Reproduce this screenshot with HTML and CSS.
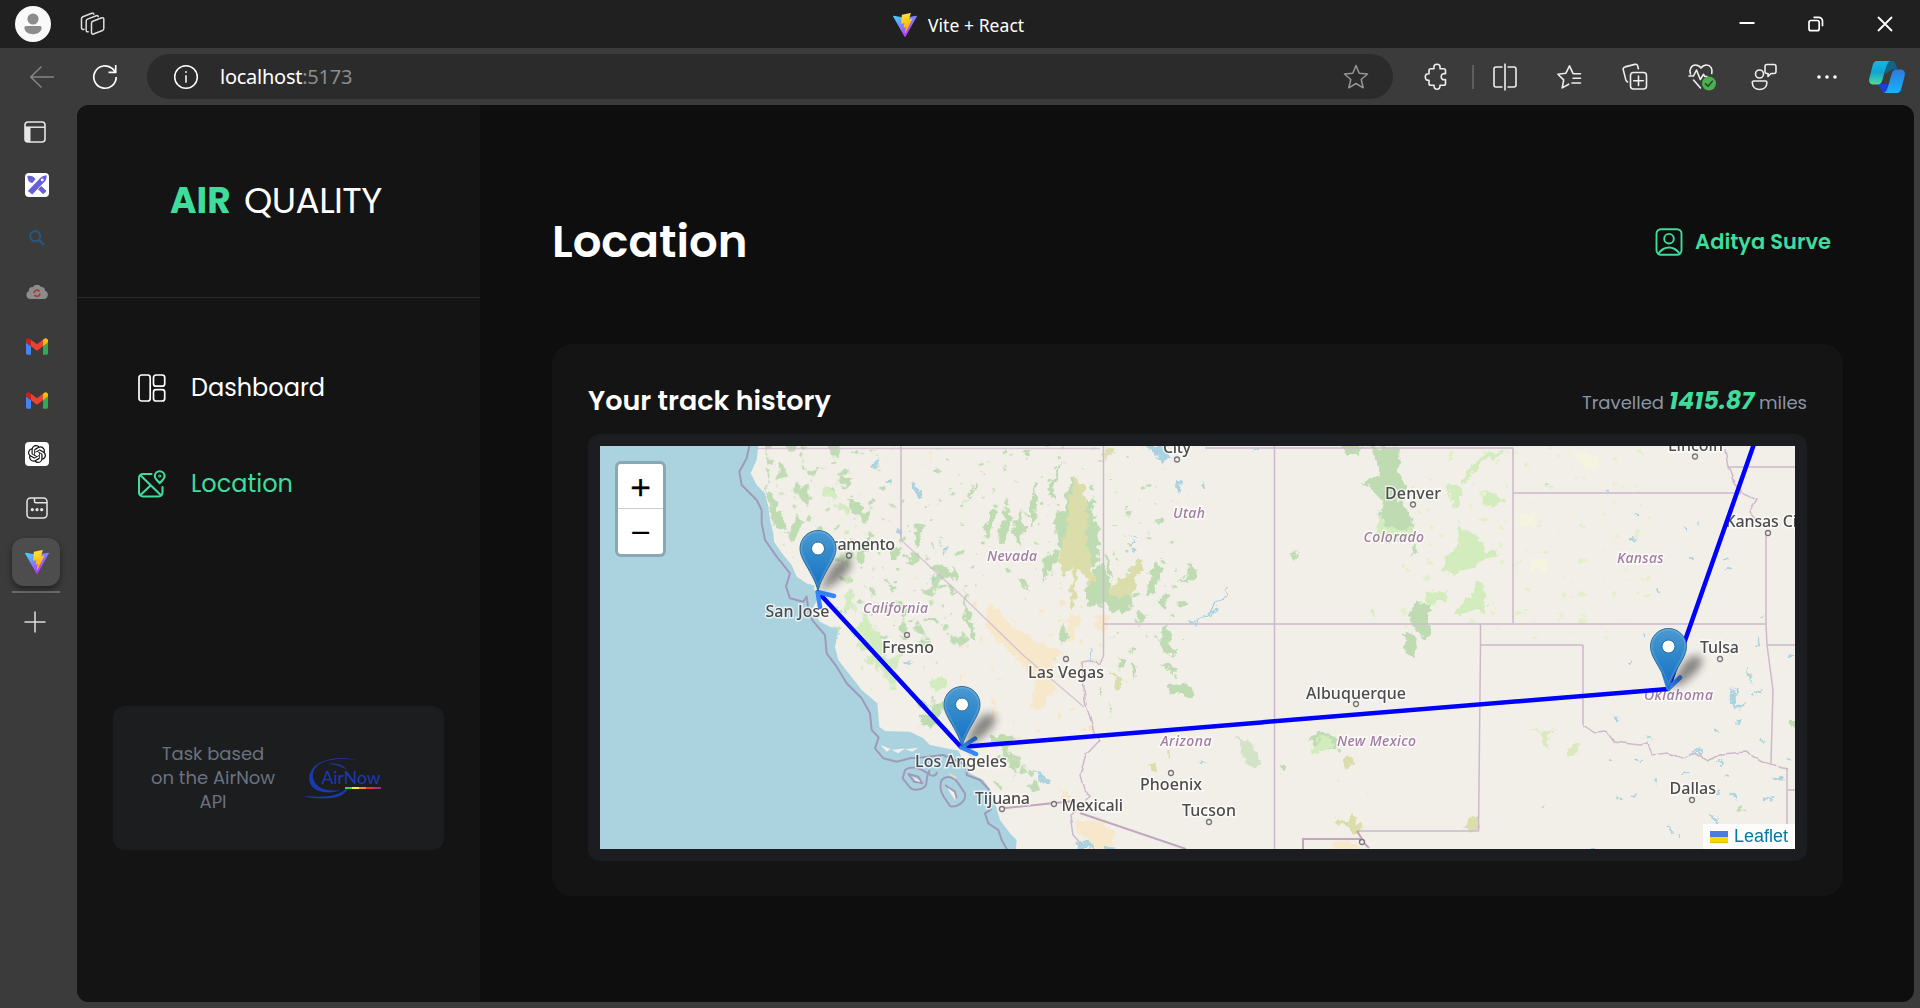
FILE: index.html
```html
<!DOCTYPE html>
<html lang="en">
<head>
<meta charset="utf-8">
<title>Vite + React</title>
<link rel="stylesheet" href="styles.css">
</head>
<body>
<svg class="defs" width="0" height="0" aria-hidden="true">
  <defs>
    <linearGradient id="vite-v" x1="0" y1="0.1" x2="0.6" y2="0.9"><stop offset="0" stop-color="#41d1ff"/><stop offset="1" stop-color="#bd34fe"/></linearGradient>
    <linearGradient id="vite-b" x1="0.4" y1="0" x2="0.6" y2="0.9"><stop offset="0" stop-color="#ffea83"/><stop offset="0.1" stop-color="#ffdd35"/><stop offset="1" stop-color="#ffa800"/></linearGradient>
    <linearGradient id="cop-a" x1="0" y1="0" x2="0" y2="1"><stop offset="0" stop-color="#16b5ea"/><stop offset="0.5" stop-color="#12a5cf"/><stop offset="1" stop-color="#52dd92"/></linearGradient>
    <linearGradient id="cop-b" x1="0" y1="0" x2="0" y2="1"><stop offset="0" stop-color="#2f78e0"/><stop offset="1" stop-color="#17b4f5"/></linearGradient>
    <linearGradient id="pin-fill" x1="0" y1="0" x2="0" y2="1"><stop offset="0" stop-color="#4b9ad2"/><stop offset="0.35" stop-color="#358bcb"/><stop offset="1" stop-color="#126fc6"/></linearGradient>
    <symbol id="vite" viewBox="0 0 256 257">
      <path fill="url(#vite-v)" d="M255.153 37.938L134.897 252.976c-2.483 4.44-8.862 4.466-11.382.048L.875 37.958c-2.746-4.814 1.371-10.646 6.827-9.67l120.385 21.517a6.537 6.537 0 0 0 2.322-.004l117.867-21.483c5.438-.991 9.574 4.796 6.877 9.62Z"/>
      <path fill="url(#vite-b)" d="M185.432.063L96.44 17.501a3.268 3.268 0 0 0-2.634 3.014l-5.474 92.456a3.268 3.268 0 0 0 3.997 3.378l24.777-5.718c2.318-.535 4.413 1.507 3.936 3.838l-7.361 36.047c-.495 2.426 1.782 4.5 4.151 3.78l15.304-4.649c2.372-.72 4.652 1.36 4.15 3.788l-11.698 56.621c-.732 3.542 3.979 5.473 5.943 2.437l1.313-2.028l72.516-144.72c1.215-2.423-.88-5.186-3.54-4.672l-25.505 4.922c-2.396.462-4.435-1.77-3.759-4.114l16.646-57.705c.677-2.35-1.37-4.583-3.769-4.113Z"/>
    </symbol>
    <symbol id="gmail" viewBox="52 42 88 66">
      <path fill="#4285f4" d="M58 108h14V74L52 59v43c0 3.32 2.69 6 6 6"/><path fill="#34a853" d="M120 108h14c3.32 0 6-2.69 6-6V59l-20 15"/><path fill="#fbbc04" d="M120 48v26l20-15v-8c0-7.42-8.47-11.65-14.4-7.2"/><path fill="#ea4335" d="M72 74V48l24 18 24-18v26L96 92"/><path fill="#c5221f" d="M52 51v8l20 15V48l-5.6-4.2c-5.94-4.45-14.4-.22-14.4 7.2"/>
    </symbol>
  </defs>
</svg>

<header class="titlebar">
  <div class="titlebar-left">
    <svg class="avatar" width="36" height="36" viewBox="0 0 36 36"><circle cx="18" cy="18" r="18" fill="#f9f9f9"/><circle cx="18" cy="13" r="5.6" fill="#8c8c8c"/><path d="M11 20h14a1.6 1.6 0 0 1 1.6 1.6c0 4.4-4 6.6-8.600 6.600s-8.600-2.200-8.600-6.600A1.600 1.600 0 0 1 11 20z" fill="#8c8c8c"/></svg>
    <svg width="26" height="26" viewBox="0 0 26 26" fill="none" stroke="#dedede" stroke-width="1.5" stroke-linejoin="round" stroke-linecap="round"><path d="M11.500 12.200c0-.9.500-1.600 1.300-1.900l9-3.500c1-.4 2 .3 2 1.300v9.500c0 .8-.5 1.600-1.300 1.900l-9 3.500c-1 .4-2-.3-2-1.300z"/><path d="M8.200 20.800c-1.200.2-2-.4-2-1.400V10c0-.8.500-1.600 1.300-1.900L16.300 4.700c1-.3 1.800.1 2 .9"/><path d="M4 18.300c-1.500.500-2.500-.2-2.500-1.300V7.600c0-.8.500-1.600 1.300-1.900l9-3.400c1-.3 1.800 0 2 .9"/></svg>
  </div>
  <div class="titlebar-title"><svg width="24" height="24"><use href="#vite"/></svg><span>Vite + React</span></div>
  <div class="window-buttons">
    <svg width="16" height="16" viewBox="0 0 16 16"><path d="M.5 7h15" stroke="#fff" stroke-width="2"/></svg>
    <svg width="16" height="16" viewBox="0 0 16 16" fill="none" stroke="#fff" stroke-width="1.700"><rect x="1" y="4.500" width="10.200" height="10.200" rx="2"/><path d="M5.500 1.300h5a4 4 0 0 1 4 4v5"/></svg>
    <svg width="16" height="16" viewBox="0 0 16 16"><path d="M1 1l14 14M15 1L1 15" stroke="#fff" stroke-width="1.800"/></svg>
  </div>
</header>

<nav class="toolbar">
  <div class="nav-buttons">
    <svg width="26" height="24" viewBox="0 0 26 24" fill="none" stroke="#858585" stroke-width="1.500"><path d="M25 12H2M12.500 1.500L1.800 12l10.700 10.500"/></svg>
    <svg width="26" height="26" viewBox="0 0 26 26" fill="none" stroke="#fff" stroke-width="1.700"><path d="M24.200 13A11.200 11.200 0 1 1 20.500 4.700L23.500 8M23.700 1v7.300h-7.200"/></svg>
  </div>
  <div class="address">
    <svg width="26" height="26" viewBox="0 0 26 26" fill="none" stroke="#fff" stroke-width="1.500"><circle cx="13" cy="13" r="11.300"/><path d="M13 11.300v7.500"/><circle cx="13" cy="8" r=".6" fill="#fff" stroke-width=".8"/></svg>
    <span class="url">localhost<span class="port">:5173</span></span>
    <svg class="star" width="26" height="26" viewBox="0 0 26 26" fill="none" stroke="#969696" stroke-width="1.500" stroke-linejoin="round"><path d="M13 1.500l3.200 7.800 8.300.7-6.300 5.500 2 8.300L13 19.500l-7.200 4.300 2-8.300L1.500 10l8.300-.7z"/></svg>
  </div>
  <div class="tools">
    <span class="tool w64"><svg width="26" height="28" viewBox="-1 0 26 28" fill="none" stroke="#eee" stroke-width="1.600" stroke-linejoin="round"><path d="M5 7.500A1.800 1.800 0 0 1 6.800 5.700H10c-.6-3 .8-4.500 3-4.500s3.600 1.500 3 4.500h3.700a1.800 1.800 0 0 1 1.800 1.800v3.300c-2.600-.6-4.300.6-4.300 2.900s1.700 3.500 4.300 2.900v3.900a1.800 1.800 0 0 1-1.800 1.800H16c.2 2.700-1 4-3 4s-3.200-1.300-3-4H6.800A1.800 1.800 0 0 1 5 20.500v-3.300c-2.500.3-3.700-1-3.700-3.200S2.500 10.500 5 10.800z"/></svg></span>
    <i class="sep"></i>
    <span class="tool w62"><svg width="26" height="28" viewBox="0 0 26 28" fill="none" stroke="#eee" stroke-width="1.600"><path d="M13 .5v27M10.500 4H4a2 2 0 0 0-2 2v16a2 2 0 0 0 2 2h6.500M15.500 4H22a2 2 0 0 1 2 2v16a2 2 0 0 1-2 2h-6.500"/></svg></span>
    <span class="tool w66"><svg width="26" height="26" viewBox="0 0 26 26" fill="none" stroke="#eee" stroke-width="1.600" stroke-linejoin="round" stroke-linecap="round"><path d="M24.500 9.700h-7.400L13.500 1.800 9.900 9.200l-8 1 5.800 5.700-1.500 8 6.500-3.700M17 14.200h7.500M16 19h8.500"/></svg></span>
    <span class="tool w66"><svg width="26" height="28" viewBox="0 0 26 28" fill="none" stroke="#eee" stroke-width="1.600" stroke-linejoin="round" stroke-linecap="round"><rect x="8.500" y="9.500" width="16" height="16.500" rx="3"/><path d="M16.500 13v9.500M11.700 17.700h9.600M5.500 19c-1.200-.7-1.500-1.600-1.800-2.600L1.300 6.900C.9 5.300 1.600 4.300 3 3.900l9.800-2.500c1.500-.4 2.500.3 2.900 1.600l.7 2.800"/></svg></span>
    <span class="tool w66 health"><svg width="30" height="30" viewBox="0 0 30 30" fill="none" stroke="#eee" stroke-width="1.600" stroke-linejoin="round" stroke-linecap="round"><path d="M3.500 12C1.800 7.500 4.500 3 8.500 3c2.500 0 4.200 1.300 5.500 3 1.300-1.700 3-3 5.500-3 4 0 6.500 4 5.300 8.500M2 14h4.500L9.500 8l3.800 9.500 3.200-5.200 1.300 2.200H20M6.500 18l7 8"/><circle cx="22" cy="21.500" r="7" fill="#4caf50" stroke="none"/><path d="M18.500 21.800l2.500 2.400 4.300-5" stroke="#2b4a2c"/></svg></span>
    <span class="tool w60"><svg width="26" height="28" viewBox="0 0 26 28" fill="none" stroke="#eee" stroke-width="1.600" stroke-linejoin="round"><circle cx="8.500" cy="11" r="4"/><path d="M2.800 18h11.600a1.500 1.500 0 0 1 1.500 1.500c0 4.500-3.300 7-7.300 7s-7.300-2.500-7.300-7A1.500 1.500 0 0 1 2.800 18zM16 1.500h7a2 2 0 0 1 2 2v5a2 2 0 0 1-2 2h-3l-3 3v-3h-1a2 2 0 0 1-2-2v-5a2 2 0 0 1 2-2z"/></svg></span>
    <span class="tool w66"><svg width="22" height="6" viewBox="0 0 22 6" fill="#fff"><circle cx="3" cy="3" r="1.800"/><circle cx="11" cy="3" r="1.800"/><circle cx="19" cy="3" r="1.800"/></svg></span>
    <span class="tool w54"><svg width="38" height="34" viewBox="0 0 38 34"><path d="M19 1h5c2 0 3.300 1.500 4 4l1.200 4H25l-8 5z" fill="#0f6488"/><path d="M9 24h10l4 9h-5c-3 0-4-1-5-4z" fill="#1d3fd0"/><path d="M9.500 1H22c-2 1-3 3-4 6.500l-3.800 13c-.8 2.800-2 4-4.600 4H5.500c-3.500 0-5-2.600-4.200-6L4.500 6c.9-3.600 2-5 5-5z" fill="url(#cop-a)"/><path d="M28.500 33H16c2-1 3-3 4-6.500l3.800-13c.8-2.800 2-4 4.600-4h4.100c3.500 0 5 2.600 4.200 6L33.500 28c-.9 3.600-2 5-5 5z" fill="url(#cop-b)"/></svg></span>
  </div>
</nav>

<div class="body">
  <aside class="tabs">
    <div class="tab"><svg class="nudge" width="22" height="22" viewBox="0 0 22 22"><rect x="1" y="1" width="20" height="20" rx="3" fill="none" stroke="#e6e6e6" stroke-width="1.600"/><path d="M1 6.200h20" stroke="#e6e6e6" stroke-width="1.500"/><path d="M1 6h5.500v15H3a2 2 0 0 1-2-2z" fill="#e6e6e6"/></svg></div>
    <div class="tab"><svg width="24" height="24" viewBox="0 0 24 24"><rect width="24" height="24" rx="4" fill="#fff"/><path d="M2.500 3c3.500-.6 6.500.6 8 3.200L7.200 10C4 9.800 2.200 6.500 2.500 3zM16.300 13l5.200 5-3.300 3.300-5.200-5z" fill="#665fd8"/><path d="M2.800 18L13.200 7.200C15.300 4.500 18 2.600 21.700 2.300c0 3.900-1.300 6.400-4.200 8.500L7.300 21.500z" fill="#665fd8"/><circle cx="17.200" cy="6.900" r="1.400" fill="#fff"/></svg></div>
    <div class="tab"><svg width="16" height="16" viewBox="0 0 16 16" fill="none" stroke="#225a86" stroke-width="2"><circle cx="6.200" cy="6.200" r="5"/><path d="M9.800 9.800l5.200 5.200"/></svg></div>
    <div class="tab"><svg width="22" height="16" viewBox="0 0 22 16"><path d="M4.500 15a4.200 4.200 0 0 1-1.700-8C2.500 4 5 2.500 7 3.200 8.500 0 13.500 0 15 3.200c2.200-.5 4.300 1.200 3.900 3.600A4.200 4.200 0 0 1 17.500 15z" fill="#8c8c8c"/><path d="M8 9a3 3 0 0 1 5.500-1.500M14 9.500A3 3 0 0 1 8.500 11" fill="none" stroke="#a83c3c" stroke-width="1.700"/></svg></div>
    <div class="tab"><svg width="22" height="17"><use href="#gmail"/></svg></div>
    <div class="tab"><svg width="22" height="17"><use href="#gmail"/></svg></div>
    <div class="tab"><svg width="24" height="24" viewBox="0 0 24 24"><rect width="24" height="24" rx="4" fill="#fff"/><path transform="translate(3 3) scale(.75)" fill="#111" d="M22.2819 9.8211a5.9847 5.9847 0 0 0-.5157-4.9108 6.0462 6.0462 0 0 0-6.5098-2.9A6.0651 6.0651 0 0 0 4.9807 4.1818a5.9847 5.9847 0 0 0-3.9977 2.9 6.0462 6.0462 0 0 0 .7427 7.0966 5.98 5.98 0 0 0 .511 4.9107 6.051 6.051 0 0 0 6.5146 2.9001A5.9847 5.9847 0 0 0 13.2599 24a6.0557 6.0557 0 0 0 5.7718-4.2058 5.9894 5.9894 0 0 0 3.9977-2.9001 6.0557 6.0557 0 0 0-.7475-7.0729zm-9.022 12.6081a4.4755 4.4755 0 0 1-2.8764-1.0408l.1419-.0804 4.7783-2.7582a.7948.7948 0 0 0 .3927-.6813v-6.7369l2.02 1.1686a.071.071 0 0 1 .038.052v5.5826a4.504 4.504 0 0 1-4.4945 4.4944zm-9.6607-4.1254a4.4708 4.4708 0 0 1-.5346-3.0137l.142.0852 4.783 2.7582a.7712.7712 0 0 0 .7806 0l5.8428-3.3685v2.3324a.0804.0804 0 0 1-.0332.0615L9.74 19.9502a4.4992 4.4992 0 0 1-6.1408-1.6464zM2.3408 7.8956a4.485 4.485 0 0 1 2.3655-1.9728V11.6a.7664.7664 0 0 0 .3879.6765l5.8144 3.3543-2.0201 1.1685a.0757.0757 0 0 1-.071 0l-4.8303-2.7865A4.504 4.504 0 0 1 2.3408 7.872zm16.5963 3.8558L13.1038 8.364 15.1192 7.2a.0757.0757 0 0 1 .071 0l4.8303 2.7913a4.4944 4.4944 0 0 1-.6765 8.1042v-5.6772a.79.79 0 0 0-.407-.667zm2.0107-3.0231l-.142-.0852-4.7735-2.7818a.7759.7759 0 0 0-.7854 0L9.409 9.2297V6.8974a.0662.0662 0 0 1 .0284-.0615l4.8303-2.7866a4.4992 4.4992 0 0 1 6.6802 4.66zM8.3065 12.863l-2.02-1.1638a.0804.0804 0 0 1-.038-.0567V6.0742a4.4992 4.4992 0 0 1 7.3757-3.4537l-.142.0805L8.704 5.459a.7948.7948 0 0 0-.3927.6813zm1.0976-2.3654l2.602-1.4998 2.6069 1.4998v2.9994l-2.5974 1.4997-2.6067-1.4997Z"/></svg></div>
    <div class="tab"><svg width="22" height="22" viewBox="0 0 22 22" fill="none" stroke="#e6e6e6" stroke-width="1.500"><rect x="1" y="1" width="20" height="20" rx="3.500"/><path d="M8.500 1v3.300a1.500 1.500 0 0 0 1.500 1.500h11"/><g fill="#e6e6e6" stroke="none"><circle cx="6.300" cy="12.700" r="1.600"/><circle cx="11" cy="12.700" r="1.600"/><circle cx="15.700" cy="12.700" r="1.600"/></g></svg></div>
    <div class="tab"><div class="tab-active"><svg width="24" height="24"><use href="#vite"/></svg></div></div>
    <div class="tab-rule"></div>
    <svg class="tab-new" width="22" height="22" viewBox="0 0 22 22"><path d="M11 .5v21M.5 11h21" stroke="#dedede" stroke-width="1.500"/></svg>
  </aside>

  <div class="page">
    <aside class="side">
      <div class="brand"><span class="brand-air">AIR</span> <span class="brand-quality">QUALITY</span></div>
      <ul class="menu">
        <li><svg width="28" height="28" viewBox="0 0 28 28" fill="none" stroke="#fff" stroke-width="1.700"><rect x="1" y="1" width="11.200" height="26" rx="2.500"/><rect x="15.500" y="1" width="11.200" height="11.200" rx="2.500"/><rect x="15.500" y="15.600" width="11.200" height="11.400" rx="2.500"/></svg><span class="dash">Dashboard</span></li>
        <li class="active"><svg width="28" height="28" viewBox="0 0 28 28" fill="none" stroke="#3fdc9c" stroke-width="2.100" stroke-linecap="round"><path d="M13.500 4H5a4 4 0 0 0-4 4v14.500a4 4 0 0 0 4 4h15.500a4 4 0 0 0 4-4V17M2.200 5l21 20.500M2.200 25.200l10.300-9.700"/><path d="M21.700 1.200a4.900 4.900 0 0 1 4.900 4.900c0 3-3 5-4.900 6.900-1.900-1.900-4.900-3.900-4.900-6.900a4.900 4.900 0 0 1 4.900-4.900z"/><circle cx="21.700" cy="6" r=".5"/></svg><span class="loc">Location</span></li>
      </ul>
      <div class="api-card">
        <p>Task based<br>on the AirNow<br>API</p>
        <svg width="80" height="44" viewBox="0 0 80 44">
          <path d="M54 4C38 .5 20 2 11 11c-8 9-6 20 5 24 6 2 14 2 21-.5C28 35 20 34 15 30 8 24 8 15 15 9 23 3 38 2 54 4z" fill="#1b3ab0"/>
          <path d="M23 8c8-1.500 17 0 21 6-6-4-12-6-21-6zM1 40c14 1.500 27 1 36-3 4-2 6-4 7-6h2c-2 5-7 9-14 10.500C22 43 10 43 1 40z" fill="#1b3ab0"/>
          <text x="18.500" y="28" textLength="59" lengthAdjust="spacingAndGlyphs">AirNow</text>
          <path d="M42 32h7" stroke="#3fd13f" stroke-width="2"/><path d="M49 32h7" stroke="#f2ee3a" stroke-width="2"/><path d="M56 32h7.500" stroke="#f08a30" stroke-width="2"/><path d="M63.500 32h7.500" stroke="#f03030" stroke-width="2"/><path d="M71 32h7" stroke="#9c3578" stroke-width="2"/>
        </svg>
      </div>
    </aside>

    <main class="main">
      <div class="head">
        <h1>Location</h1>
        <div class="user"><svg width="28" height="28" viewBox="0 0 28 28" fill="none" stroke="#3fdc9c" stroke-width="1.900"><rect x="1.500" y="1.200" width="25" height="25.600" rx="4.500"/><circle cx="14" cy="10.700" r="4.800"/><path d="M3.500 25.500c2.500-3.500 6-6 10.500-6s8 2.500 10.500 6"/></svg><span>Aditya Surve</span></div>
      </div>
      <section class="card">
        <div class="card-head"><h2>Your track history</h2><p class="dist"><span class="d1">Travelled</span><em>1415.87</em><span class="d2">miles</span></p></div>
        <div class="map-frame"><div class="map">
<svg class="map-svg" viewBox="600 446 1195 403" preserveAspectRatio="none">
<defs>
  <filter id="rough" x="-5%" y="-5%" width="110%" height="110%"><feTurbulence type="fractalNoise" baseFrequency=".12" numOctaves="3" seed="4"/><feDisplacementMap in="SourceGraphic" scale="12" xChannelSelector="R" yChannelSelector="G"/></filter>
  <filter id="wiggle" x="-5%" y="-5%" width="110%" height="110%"><feTurbulence type="fractalNoise" baseFrequency=".08" numOctaves="2" seed="9"/><feDisplacementMap in="SourceGraphic" scale="4" xChannelSelector="R" yChannelSelector="G"/></filter>
  <filter id="patch"><feTurbulence type="fractalNoise" baseFrequency=".07 .06" numOctaves="4" seed="12"/><feColorMatrix values="0 0 0 0 0  0 0 0 0 0  0 0 0 0 0  14 0 0 0 -8.200" result="m"/><feComposite in="SourceGraphic" in2="m" operator="in"/></filter>
  <filter id="speck"><feTurbulence type="fractalNoise" baseFrequency=".09 .12" numOctaves="3" seed="31"/><feColorMatrix values="0 0 0 0 0  0 0 0 0 0  0 0 0 0 0  12 0 0 0 -8.300" result="m"/><feComposite in="SourceGraphic" in2="m" operator="in"/></filter>
  <filter id="soft" x="-50%" y="-50%" width="200%" height="200%"><feGaussianBlur stdDeviation="4"/></filter>
  <clipPath id="land"><path transform="translate(590 430) scale(.33333)" d="M508 48L500 90 482 130 500 165 525 190 535 230 540 270 550 310 552 335 580 375 605 405 620 440 650 460 670 475 682 510 665 540 690 575 720 590 745 600 735 650 745 690 780 735 815 780 862 820 868 890 885 903 960 905 1000 925 1020 945 1105 962 1140 1030 1180 1050 1205 1085 1215 1120 1230 1170 1260 1210 1280 1230 1275 1257 4000 1257 4000 48z"/></clipPath>
  <g id="pin">
    <path d="M2 0C8-16 18-36 30-33c12 4-8 26-28 33z" fill="#000" opacity=".45" filter="url(#soft)"/>
    <path d="M0 0C-2-9-7-17-12-26-15.500-32-18-37-18-42.500a18 18 0 0 1 36 0C18-37 15.500-32 12-26 7-17 2-9 0 0z" fill="url(#pin-fill)" stroke="#2e6c97" stroke-width="1"/>
    <path d="M0-5C-2-11-6-18-10.500-26.500-14-32.500-16.700-37-16.700-42.500a16.700 16.700 0 0 1 33.400 0C16.700-37 14-32.500 10.500-26.500 6-18 2-11 0-5z" fill="none" stroke="#fff" stroke-opacity=".15" stroke-width="1.500"/>
    <circle cy="-42.500" r="6.500" fill="#fff" stroke="#2e6c97" stroke-width="1"/>
  </g>
</defs>
<rect x="600" y="446" width="1195" height="403" fill="#aad3df"/>
<g transform="translate(590 430) scale(.33333)">
  <path fill="#f2efe9" filter="url(#wiggle)" d="M508 20L500 90 482 130 500 165 525 190 535 230 540 270 550 310 552 335 580 375 605 405 620 440 650 460 670 475 682 510 665 540 690 575 720 590 745 600 735 650 745 690 780 735 815 780 862 820 868 890 885 903 960 905 1000 925 1020 945 1105 962 1140 1030 1180 1050 1205 1085 1215 1120 1230 1170 1260 1210 1280 1230 1275 1290 3700 1290 3700 20z"/>
  <g fill="#f2efe9"><path d="M872 945l30 12-12 8zM905 960l40-5-20 15zM945 958l40-5-18 12zM968 1040l28 15-10 8zM1075 1068l26 30-6 12-20-30z"/></g>
  <path d="M1072 1025l30 18-10 5z" fill="#dde3c0"/>
  <g fill="none" stroke="#9f8fb5" stroke-width="6" opacity=".85" filter="url(#wiggle)" stroke-linejoin="round">
    <path d="M482 30L470 85 448 125 455 165 500 210 515 240 515 280 525 330 560 380 600 430 588 470 600 505 640 515 650 500 655 540 668 572 705 615 710 670 740 710 770 760 815 805 840 850 845 900 866 922 855 955 880 985 920 995 960 985 1000 982 1060 975 1130 1005 1130 1035 1170 1050 1198 1080"/>
    <path d="M1205 1137L1185 1150 1195 1180 1225 1200 1235 1230 1252 1260"/>
    <path d="M945 1020c20-15 50-5 68 10l-5 35c-8 15-40 20-50 5l-20-25zM1055 1050c15-15 35-10 50 10l20 30c5 25-25 45-45 38l-20-30c-12-20-10-35-5-48zM955 1032l30 8 12 20-25-5zM1065 1065l30 20 5 20M1020 1020a12 10 0 1 0 20 5"/>
  </g>
</g>
<g clip-path="url(#land)">
 <g filter="url(#patch)">
  <path fill="#bfdcb3" d="M765 446L840 446 870 500 870 560 905 600 930 640 950 700 930 730 890 650 850 600 800 560 770 500z"/>
  <path fill="#bfdcb3" d="M890 520L930 525 945 610 970 640 955 650 920 590z"/>
  <path fill="#d2ebc0" d="M815 480L850 500 860 580 900 640 905 690 870 690 835 610z"/>
  <path fill="#bfdcb3" d="M955 740L1020 735 1040 790 1010 800z"/>
 </g>
 <g filter="url(#speck)">
  <path fill="#bfdcb3" d="M760 446H1190V640H760z"/>
  <path fill="#f6e6c8" d="M960 600H1110V740H960z"/>
  <path fill="#e3efc8" d="M1400 446H1650V640H1400z"/>
 </g>
 <g filter="url(#rough)">
  <g transform="translate(590 430) scale(.33333)">
   <g fill="#bedbb2"><path d="M525 180l25 20 15 40 20 40 10 25-25 0-20-25-8-50zM745 130l50 25-15 10-35-5zM775 205l45 30-20 25-20-20zM975 280l15 10-2 60-14-10zM900 360l35-10-15 40-20 0zM990 855l45-5 5 35-45 5zM1200 910l80 20-40 20-40-15zM1255 970l28 30-5 20-23-15z"/>
    <path d="M1140 190l20-30 5 5-40 60zM1180 290l30-60 20 10-45 90zM1220 330l30-100 20 30-30 80zM1270 300l20-60 15 60-20 50zM1320 220l15-60 5 90-20 50zM1385 300l20-60 30 10-20 60zM1400 120l15-40-25 130-15-20zM1365 380l35-30 5 40-45 70zM1290 450l15 0 10 40zM1020 410l25-10 60 30 0 20-60-10zM1080 460l25 30-20 5zM1120 480l20 80 20 70-15-10-25-80zM1345 650l35 10 20 35-30-10z"/></g>
   <g fill="#dbdeaa"><path d="M1440 340l-25 60 0 40 30-20z"/></g>
   <g fill="#f7e8cb"><path d="M1190 530l20-8 40 50 70 50 30 20 70 20-30 30 0 90-40 60-25-10 10-90-90-90-50-50zM1015 60l15 0-15 40z"/></g>
   <g fill="#d3ecbd"><path d="M780 600l60-30 30 60 20 40-30 10-50-50zM830 680l50-10 30 60-20 15zM1020 745l45 0 5 20-40 15z"/></g>
   <g fill="#aad3df"><path d="M965 160l15 0 12 45-18-15zM915 290l25 0-5 35-15-10zM845 105l20-15-10 25zM885 150l28 0 0 8-28 0zM1335 1015l45 30 0 25-25-10zM1025 440l20 5-15 10zM1060 350l10 5-5 20zM650 460l30 30-20 5zM725 590l20 15-5 20zM945 692l25 5-15 5zM1365 1135l20 8M1370 1155l20 5z"/></g>
  </g>
  <g transform="translate(1060 430) scale(.33333)">
   <g fill="#bedbb2"><path d="M35 140l30 20-15 150-40 80-20-80 20-60zM80 200l30 60 10 120-25 40-30-60zM135 370l15 20 10 60-20-20zM90 460l30-60 40 70 50 20 5 45-30 15-40-20-60 0-10-25zM285 400l25 10-30 80-20 10 5-50zM300 500l20-5 0 40-20 0zM385 395l15 0 10 50-55 15 30-30zM325 580l10 60 15 40-25 0-30-45zM310 700l50 20-10 15-30-10zM325 770l50-10 25 20-10 25-60-15zM215 650l15 5-15 20zM215 700l15 5-5 40-12-20zM165 680l30 20-10 15zM145 820l8 5-2 40zM120 770l8 20-8 0zM5 580l15 20-5 40-15-5zM225 540l40 15-30 25z"/>
    <path d="M850 48l60 0-15 30-40-10zM925 48l95 10-5 60 20 50-20 40 35 50 10 50-60 0-40-40 10-50-30-30-30-30 50-20-5-40zM685 370l35 0-15 20zM1070 510l40 20 0 80-20 20-30-40-15-30zM1035 600l35 30-10 50-25-20zM655 1000l20 5 5 20-20 0zM745 915l50-8 30 15 0 30-20 10-60-30zM825 955l20 5-10 15zM1060 345l10 15-15 20z"/><path opacity=".6" d="M530 920l50 20 25 60-25 20-30-40z"/></g>
   <g fill="#dbdeaa"><path d="M45 140l30 30 5 70 0 100 25 110-20 10-30-50-15 130-10-10 10-120-50-10 20-60 15-60 5-60zM140 55l30 5-40 30zM235 385l15 15-20 50-10 50-40 5-40-20 50-40zM145 720l30 20 20 30-20 15zM820 1170l45 0 15-20 5 20 20 25-15 20-30-30zM855 975l25 0 0 35-25 0zM270 1000l20-5 0 30-20 0zM320 960l10 5-5 20zM1250 1155l-45 45 50 2z"/></g>
   <g fill="#d3ecbd"><path d="M955 270l45 25 60 0 0 30-80 20-30-20zM1160 160l40 10 0 60-20 10zM1265 180l70 30-20 20-45-10zM1200 290l60 40 20 30 40 10-50 15-20 30-40 0-20 15-40-5 10-50 30-20zM1100 490l30-10 40 15-50 30-25 0zM1250 450l20 10 10 90-40-10-50 15 20-50 30-5zM750 970l20-40 40-10 10 30-50 20zM940 530l10 20-8 15zM1200 160l60-80 90-20-90 40-40 60z"/></g>
   <g fill="#f7e8cb"><path d="M0 1065l45 50-10 20-35-30zM50 1165l70 10 45 30-5 30-20 22-25 0-70-50zM110 560l30-15 10 20-15 40-30-10zM30 560l30-15-20 90-20-5zM820 1235l70 0 10 22-75 0zM920 1080l10 5-5 20z"/></g>
   <g fill="#aad3df"><path d="M255 48l55 0 20 40-25 12-20-30zM350 145l20 10-15 30-10-15zM425 155l15 15-12 2zM50 1240l30-10 30 27-60 0zM130 1245l25 5 0 10-20 0zM415 990l30 10-25-2zM210 318l22 0M830 1045l8 10-5 5zM820 388l25 3"/></g>
   <g fill="none" stroke="#aad3df" stroke-width="6"><path d="M505 468l-10 30-25 20-10 30-25 15-45 18M95 655l-5 35M215 322h20M213 339h16M214 356h12M580 60l20-5"/></g>
  </g>
  <g transform="translate(1460 370) scale(.33333)">
   <path fill="#dbe9be" d="M215 1075l30 15 40-20-25 30 10 40-20-15-10-30-15-10zM320 1130l40-10-5 30-30 5z"/>
   <path fill="#f4f4df" d="M170 430l55 0 0 40-55 0zM210 570l45 0 0 30-45 0zM340 240l70 20 0 45-40-15z"/>
   <path fill="#bedbb2" d="M860 910l15 0 0 15-15 0zM990 1050l15 0 0 20-15 0zM835 1310l20 5-20 10z"/>
   <g fill="none" stroke="#aad3df" stroke-width="7"><path d="M815 955l10 60 25-10M830 960l-15 40M880 830l25-25M820 820l-5 30M860 890l15 50M700 1150l20-15-5 20M665 1210l20-5M755 1330l20 30M935 1225l30 5-10-10M910 1280l30 15M810 1270l20 10M770 1275l10-12M625 1375l15 15M515 1275l15-2M445 1170l10-3M565 1100l8 5M690 560l15 15M705 450l10 15M675 475l8 12M535 435l-10 5M435 360l15 2M585 660l12 5M550 795l8 5M510 870l8 5M795 600l15 3M795 570l10-2M980 1168l12 2M905 1115l12-5M885 965l15 5M835 1055l15 2M765 1080l8-5M530 1175l10-4M775 1180l10-5M790 1225l20-3M245 1310l8 3M390 1436l15 3M985 850l12 5M905 735l5 6M465 1043l10 2M585 1237l6 0M470 1288l8-2M650 1398l5 0M255 347l8 1M510 510l14 1"/></g>
  </g>
 </g>
</g>
<g fill="none" stroke="#cdb9cb" stroke-width="1.500">
 <path d="M901 446V540M1103.500 446V655M1274.500 446V849M1205 448H1513V623M1103.500 624H1766M1513 493H1741M1480.500 624V645M1583 645V725M1583 645H1480.500L1478.500 831H1357M1766 531V624L1767 645H1795M1767 645L1773 690 1771 763M1787 768V824M1787 790H1795M1728 467H1795"/>
 <path d="M901 540L960 594 1023 655 1084 707M757 448.500H1100" stroke-opacity=".75"/>
 <g filter="url(#wiggle)"><path d="M1103.500 655L1100 665 1092 660 1082 662 1085 700 1094 733 1100 740 1086 755 1080 775 1084 790 1090 795 1080 808 1070 815 1073 835 1082 845M1725 449L1728 467 1733 480 1741 493 1757 500 1750 512 1764 528M1583 725L1595 733 1607 732 1614 742 1640 745 1648 743 1652 755 1668 753 1682 758 1695 753 1708 761 1722 754 1746 752 1762 762 1787 768"/></g>
</g>
<g fill="none" stroke="#b494b2" stroke-width="2" opacity=".8"><path d="M1000 808.500L1075 801M1080 813L1186 849M1303 849V839H1362L1357 831M1362 841L1369 848"/></g>

<g class="dots"><circle cx="849" cy="555.500" r="2.500"/><circle cx="907" cy="635" r="2.500"/><circle cx="1066" cy="659" r="2.500"/><circle cx="1002" cy="809" r="2.500"/><circle cx="1054" cy="804" r="2.500"/><circle cx="1171" cy="773" r="2.500"/><circle cx="1209" cy="822" r="2.500"/><circle cx="1356" cy="704" r="2.500"/><circle cx="1413" cy="504.500" r="2.500"/><circle cx="1177" cy="459.500" r="2.500"/><circle cx="1362" cy="842" r="2.500"/><circle cx="1695" cy="456.500" r="2.500"/><circle cx="1768" cy="533" r="2.500"/><circle cx="1720" cy="659" r="2.500"/><circle cx="1692" cy="800" r="2.500"/></g>
<g class="city">
 <text x="807" y="550" textLength="88">Sacramento</text><text x="765.500" y="617" textLength="64">San Jose</text><text x="882" y="653" textLength="52">Fresno</text><text x="1028" y="678" textLength="76">Las Vegas</text><text x="915" y="766.500" textLength="92">Los Angeles</text><text x="975" y="804" textLength="55">Tijuana</text><text x="1061.500" y="811" textLength="61.500">Mexicali</text><text x="1140" y="790" textLength="62">Phoenix</text><text x="1182" y="816" textLength="54">Tucson</text><text x="1306" y="699" textLength="100">Albuquerque</text><text x="1385" y="499" textLength="56">Denver</text><text x="1163" y="453" textLength="28">City</text><text x="1668" y="451" textLength="55">Lincoln</text><text x="1725.500" y="527" textLength="86">Kansas City</text><text x="1700" y="653" textLength="39">Tulsa</text><text x="1669.500" y="794" textLength="46.500">Dallas</text>
</g>
<g class="state">
 <text x="987" y="561" textLength="50">Nevada</text><text x="863" y="613" textLength="65">California</text><text x="1173" y="518" textLength="32">Utah</text><text x="1363.500" y="542" textLength="60.500">Colorado</text><text x="1160.500" y="746" textLength="51">Arizona</text><text x="1337" y="746" textLength="79">New Mexico</text><text x="1617" y="563" textLength="46.500">Kansas</text><text x="1644" y="700" textLength="69">Oklahoma</text>
</g>
<g fill="none" stroke-linecap="round" stroke-linejoin="round">
 <path d="M818 592L961 747 1668 689 1754 444" stroke="#00f" stroke-width="4.500"/>
 <g stroke="#3388ff" stroke-width="4.500"><path d="M834 596L817.500 592 820 607M975 738.500L961.500 747.500 976 754M1680 677.500L1668.500 688.500 1664 674"/></g>
</g>
<use href="#pin" x="818" y="591"/><use href="#pin" x="962" y="747"/><use href="#pin" x="1668.500" y="689"/>
</svg>
          <div class="zoom"><span class="plus">+</span><span class="minus">−</span></div>
          <div class="attribution"><svg width="18" height="12" viewBox="0 0 18 12"><path fill="#4c7be1" d="M0 0h18v6H0z"/><path fill="#ffd500" d="M0 6h18v6H0z"/><path fill="#e0bc00" d="M0 11h18v1H0z"/></svg><span>Leaflet</span></div>
        </div></div>
      </section>
    </main>
  </div>
</div>
</body>
</html>
```
FILE: styles.css
```css
* { box-sizing: border-box; margin: 0; padding: 0; }
body { width: 1920px; height: 1008px; overflow: hidden; background: #3b3b3b; display: flex; flex-direction: column; font-family: "Noto Sans", sans-serif; color: #fff; }
svg { display: block; flex: none; }
.defs { position: absolute; }

/* Window title bar */
.titlebar { height: 48px; background: #202020; display: grid; grid-template-columns: 1fr auto 1fr; align-items: center; }
.titlebar-left { display: flex; align-items: center; gap: 29px; padding-left: 15px; }
.titlebar-title { display: flex; align-items: center; gap: 11px; padding-top: 1px; font-size: 17.500px; letter-spacing: 0.05px; width: 134px; white-space: nowrap; }
.window-buttons { display: flex; justify-content: flex-end; gap: 53px; padding-right: 27px; }

/* Browser toolbar */
.toolbar { height: 57px; display: flex; align-items: center; }
.nav-buttons { width: 147px; padding-left: 29px; display: flex; align-items: center; gap: 37px; }
.address { width: 1246px; height: 45px; border-radius: 23px; background: #2b2b2b; display: flex; align-items: center; padding: 0 24px 0 26px; }
.url { margin-left: 21px; font-size: 20px; letter-spacing: -0.25px; }
.port { color: #8c8c8c; }
.star { margin-left: auto; }
.tools { display: flex; align-items: center; padding-left: 11px; }
.tool { display: flex; justify-content: center; }
.w54 { width: 54px; } .w60 { width: 60px; } .w62 { width: 62px; } .w64 { width: 64px; } .w66 { width: 66px; }
.health { padding-left: 2px; }
.sep { width: 2px; height: 24px; margin: 0 0 0 4px; background: #5e5e5e; }

/* Vertical tabs */
.body { flex: 1; display: flex; padding: 0 6px 6px 0; }
.tabs { width: 77px; }
.tab { height: 54px; padding-right: 3px; display: flex; align-items: center; justify-content: center; }
.tab:first-child { height: 53px; }
.tab:nth-child(2) { height: 53px; }
.nudge { margin-right: 5px; }
.tab-active { width: 48px; height: 48px; border-radius: 12px; background: #4d4d4d; margin-right: 2px; padding-left: 2px; display: flex; align-items: center; justify-content: center; box-shadow: 0 3px 6px rgba(0, 0, 0, .45); }
.tab-rule { width: 48px; height: 2px; margin: 2px 0 0 12px; background: #6a6a6a; }
.tab-new { margin: 18px 0 0 24px; }

/* App */
.page { flex: 1; display: flex; border-radius: 12px; overflow: hidden; background: #0e0e0e; font-family: Poppins, Inter, sans-serif; }
.side { width: 403px; background: #141414; }
.brand { height: 193px; padding: 0 0 2px 93px; border-bottom: 1px solid #2a2a2a; display: flex; align-items: center; gap: 13px; font-size: 36px; white-space: nowrap; }
.brand-air { font-weight: 700; color: #3fdc9c; width: 61px; }
.brand-quality { font-weight: 400; letter-spacing: -0.6px; }
.menu { list-style: none; padding: 65px 0 0 61px; }
.menu li { height: 50px; margin-bottom: 46px; display: flex; align-items: center; gap: 25px; font-size: 24px; }
.menu li span { padding-bottom: 1px; }
.menu .active { color: #3fdc9c; }
.api-card { width: 331px; height: 144px; margin: 151px 0 0 36px; border-radius: 12px; background: #1c1d1f; display: flex; align-items: center; padding-left: 38px; }
.menu + .api-card { margin-top: 197px; }
.api-card p { width: 124px; text-align: center; font-size: 18px; line-height: 24px; color: #6b7280; white-space: nowrap; }
.api-card svg { margin-left: 28px; }
.api-card text { font: 18px Lato, sans-serif; fill: #1b3ab0; }
.main { flex: 1; padding: 0 71px 0 72px; }
.head { height: 239px; padding: 34px 12px 0 0; display: flex; align-items: center; justify-content: space-between; }
h1 { font-size: 45px; font-weight: 600; }
.user { display: flex; align-items: center; gap: 12px; font-size: 21px; font-weight: 600; color: #3fdc9c; }
.card { height: 552px; border-radius: 20px; background: #141414; padding: 36px 36px 0; }
.card-head { height: 54px; padding-top: 5px; display: flex; justify-content: space-between; }
h2 { font-size: 27px; font-weight: 600; line-height: 32px; }
.dist { display: flex; align-items: baseline; gap: 5px; height: 32px; line-height: 32px; font-size: 18px; color: #8b95a5; }
.dist em { font-size: 24px; font-weight: 700; color: #3fdc9c; }
.map-frame { height: 427px; border-radius: 12px; background: #1c1d21; padding: 12px; }
.map { position: relative; height: 403px; overflow: hidden; }
.map-svg { width: 1195px; height: 403px; }
.dots circle { fill: #f2efe9; stroke: #777; stroke-width: 1.300; }
.city text { font: 500 16px "Noto Sans", sans-serif; fill: #4c4c4c; stroke: #fff; stroke-opacity: .65; stroke-width: 3; paint-order: stroke; }
.state text { font: italic 500 14px "Noto Sans", sans-serif; fill: #a07ba0; stroke: #fff; stroke-opacity: .65; stroke-width: 3; paint-order: stroke; }
.zoom { position: absolute; left: 15px; top: 15px; width: 51px; height: 96px; border: 3px solid rgba(0, 0, 0, .2); border-radius: 6px; background: #fff; background-clip: padding-box; color: #000; font: 27px/46px "DejaVu Sans", sans-serif; }
.zoom span { display: block; height: 45px; text-align: center; }
.plus { border-bottom: 1px solid #ccc; -webkit-text-stroke: .6px #000; }
.attribution { position: absolute; right: 0; bottom: 0; width: 92px; height: 25px; padding-left: 7px; display: flex; align-items: center; gap: 6px; background: rgba(255, 255, 255, .8); color: #0078a8; font: 18px "Liberation Sans", sans-serif; }
```
